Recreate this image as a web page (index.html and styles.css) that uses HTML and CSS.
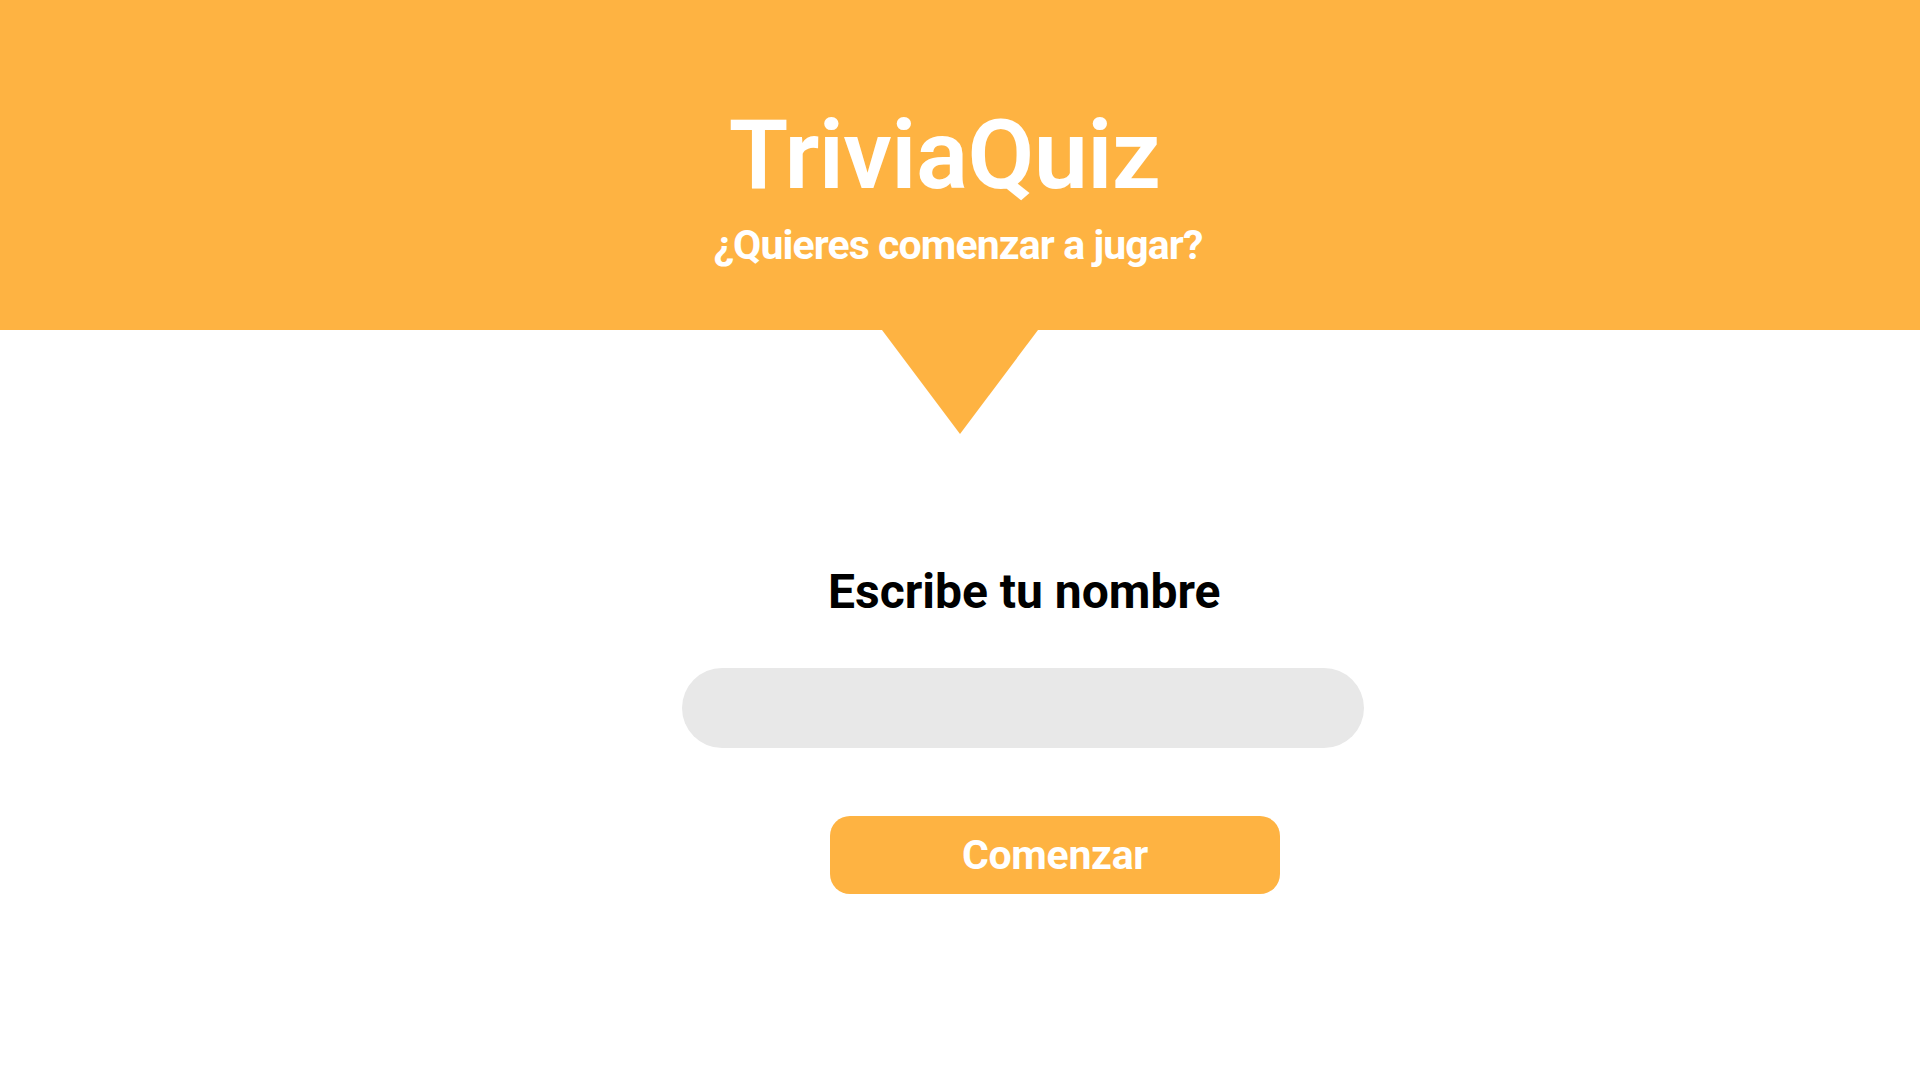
FILE: index.html
```html
<!DOCTYPE html>
<html lang="es">
<head>
<meta charset="utf-8">
<title>TriviaQuiz</title>
<link rel="stylesheet" href="styles.css">
</head>
<body>
<header class="hero">
  <h1 class="hero-title">TriviaQuiz</h1>
  <p class="hero-sub">¿Quieres comenzar a jugar?</p>
</header>
<div class="pointer"></div>
<main class="form">
  <h2 class="form-label">Escribe tu nombre</h2>
  <input class="name-input" type="text">
  <button class="start-btn" type="button">Comenzar</button>
</main>
</body>
</html>
```
FILE: styles.css
```css
* { box-sizing: border-box; }
html, body { margin: 0; padding: 0; }
body {
  width: 1920px;
  height: 1080px;
  background: #ffffff;
  font-family: Roboto, "Liberation Sans", sans-serif;
  overflow: hidden;
}
.hero {
  height: 330px;
  background: #feb342;
  display: flex;
  flex-direction: column;
  align-items: center;
  padding-top: 99px;
}
.hero-title {
  margin: 0 0 0 -31px;
  font-size: 97px;
  font-weight: 600;
  line-height: 112px;
  letter-spacing: -0.6px;
  color: #ffffff;
}
.hero-sub {
  margin: 10px 0 0 -4px;
  font-size: 41px;
  font-weight: 700;
  line-height: 48px;
  letter-spacing: -0.9px;
  color: #ffffff;
}
.pointer {
  width: 156px;
  height: 104px;
  margin: 0 auto;
  background: #feb342;
  clip-path: polygon(0 0, 100% 0, 50% 100%);
}
.form {
  display: flex;
  flex-direction: column;
  align-items: flex-start;
  padding-left: 682px;
  padding-top: 130px;
}
.form-label {
  margin: 0 0 0 146px;
  font-size: 48px;
  font-weight: 700;
  line-height: 56px;
  color: #000000;
}
.name-input {
  margin-top: 48px;
  width: 682px;
  height: 80px;
  border: none;
  border-radius: 40px;
  background: #e8e8e8;
  outline: none;
}
.start-btn {
  margin: 68px 0 0 148px;
  width: 450px;
  height: 78px;
  border: none;
  border-radius: 20px;
  background: #feb342;
  color: #ffffff;
  font-family: Roboto, "Liberation Sans", sans-serif;
  font-size: 41px;
  font-weight: 700;
  letter-spacing: -0.3px;
  padding: 0;
}
```
